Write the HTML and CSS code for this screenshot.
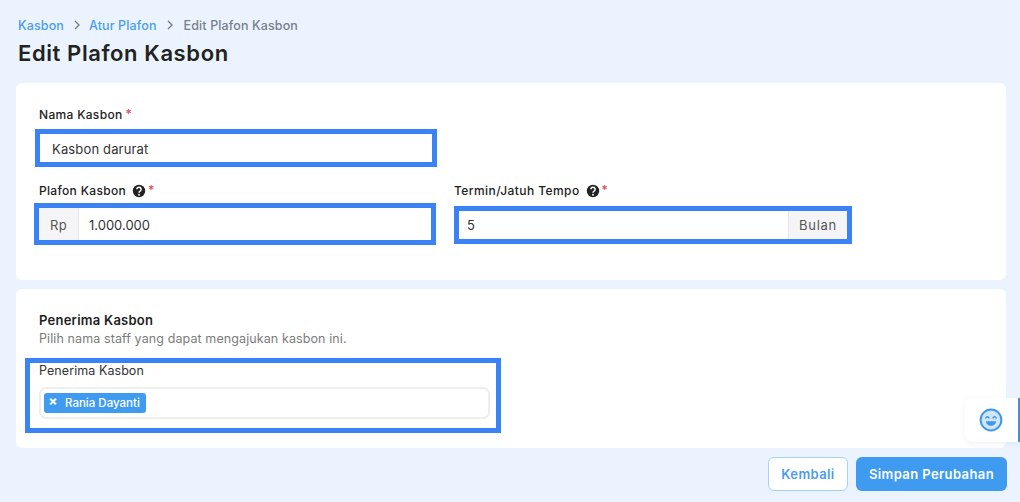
FILE: index.html
```html
<!DOCTYPE html>
<html lang="id">
<head>
<meta charset="utf-8">
<title>Edit Plafon Kasbon</title>
<link rel="stylesheet" href="styles.css">
</head>
<body>
<main class="page">
  <nav class="crumbs">
    <a class="crumb-link">Kasbon</a>
    <svg class="chev" viewBox="0 0 8 10"><path d="M2 1l4 4-4 4" fill="none" stroke="currentColor" stroke-width="1.4"/></svg>
    <a class="crumb-link">Atur Plafon</a>
    <svg class="chev" viewBox="0 0 8 10"><path d="M2 1l4 4-4 4" fill="none" stroke="currentColor" stroke-width="1.4"/></svg>
    <span class="crumb-current">Edit Plafon Kasbon</span>
  </nav>
  <h1 class="title">Edit Plafon Kasbon</h1>

  <section class="card card-main">
    <div class="label">Nama Kasbon <span class="req req-name">*</span></div>
    <div class="hl hl-name"><div class="plain-value">Kasbon darurat</div></div>
    <div class="row">
      <div class="col col-left">
        <div class="label">Plafon Kasbon
          <svg class="help" viewBox="0 0 16 16"><circle cx="8" cy="8" r="6.2" fill="#222"/><path d="M5.9 6.3a2.1 2.1 0 1 1 3.2 1.8c-.7.4-1.1.8-1.1 1.6" fill="none" stroke="#fff" stroke-width="1.5"/><circle cx="8" cy="11.7" r=".95" fill="#fff"/></svg>
          <span class="req">*</span></div>
        <div class="hl hl-plafon">
          <span class="addon addon-left">Rp</span><span class="value">1.000.000</span>
        </div>
      </div>
      <div class="col col-right">
        <div class="label label-wide">Termin/Jatuh Tempo
          <svg class="help" viewBox="0 0 16 16"><circle cx="8" cy="8" r="6.2" fill="#222"/><path d="M5.9 6.3a2.1 2.1 0 1 1 3.2 1.8c-.7.4-1.1.8-1.1 1.6" fill="none" stroke="#fff" stroke-width="1.5"/><circle cx="8" cy="11.7" r=".95" fill="#fff"/></svg>
          <span class="req">*</span></div>
        <div class="hl hl-termin">
          <span class="value value-termin">5</span><span class="addon addon-right">Bulan</span>
        </div>
      </div>
    </div>
  </section>

  <section class="card card-recipients">
    <h2 class="section-title">Penerima Kasbon</h2>
    <p class="section-sub">Pilih nama staff yang dapat mengajukan kasbon ini.</p>
    <div class="hl hl-recipients">
      <div class="field-label">Penerima Kasbon</div>
      <div class="multi">
        <span class="tag"><span class="tag-x">×</span><span class="tag-text">Rania Dayanti</span></span>
      </div>
    </div>
  </section>

  <footer class="actions">
    <button class="btn btn-outline">Kembali</button>
    <button class="btn btn-solid">Simpan Perubahan</button>
  </footer>
</main>

<aside class="feedback">
  <svg class="smile" viewBox="0 0 24 24">
    <circle cx="12" cy="12" r="10.4" fill="#cfe5fb" stroke="#3f97ec" stroke-width="2"/>
    <path d="M6.8 10c.6-1.6 2.6-1.600 3.200 0M14 10c.6-1.6 2.600-1.600 3.200 0" fill="none" stroke="#3f97ec" stroke-width="1.400" stroke-linecap="round"/>
    <path d="M7 13.200h10c0 2.700-2.200 4.600-5 4.600s-5-1.900-5-4.600z" fill="#3f97ec"/>
  </svg>
</aside>
</body>
</html>
```
FILE: styles.css
```css
* { box-sizing: border-box; }
html, body { margin: 0; height: 502px; overflow: hidden; }
body {
  background: #ebf4fe;
  font-family: Inter, "Liberation Sans", sans-serif;
  color: #222;
  position: relative;
}
.page { padding: 17px 13px 0 16px; display: flex; flex-direction: column; }

.crumbs { display: flex; align-items: center; height: 16px; margin-left: 2px; font-size: 12.500px; font-weight: 500; letter-spacing: .12px; }
.crumb-link { color: #4a9df0; }
.crumb-current { color: #78808c; margin-left: 2px; }
.chev { width: 8px; height: 10px; margin: 0 8px 0 9px; color: #78808c; }

.title { margin: 4px 0 0 2px; font-size: 22px; line-height: 32px; font-weight: 600; color: #222; letter-spacing: .6px; }

.card { background: #fff; border-radius: 6px; width: 990px; }
.card-main { margin-top: 14px; height: 197px; padding: 24px 0 0 23px; }
.card-recipients { margin-top: 9px; height: 159px; padding: 22px 0 0 23px; }

.label { font-size: 12px; line-height: 16px; font-weight: 550; letter-spacing: .32px; color: #222; display: flex; align-items: center; }
.label-wide { letter-spacing: .42px; }
.req { color: #e5484d; margin-left: 1px; margin-top: -3px; }
.req-name { margin-left: 3px; }
.help { width: 16px; height: 16px; margin-left: 5px; }

.hl { border: 5px solid #3b82f6; background: #fff; display: flex; align-items: stretch; font-size: 13px; color: #333; }
.hl-name { width: 402px; height: 38px; margin: 6px 0 0 -4px; letter-spacing: .15px; }
.plain-value { padding: 0 0 0 12px; line-height: 31px; width: 100%; }

.row { display: flex; margin-top: 16px; }
.col { display: flex; flex-direction: column; }
.col-left { width: 392px; margin-right: 23px; }
.hl-plafon { width: 402px; height: 42px; margin: 4px 0 0 -5px; }
.hl-plafon .addon, .hl-plafon .value { padding-top: 2px; }
.hl-termin { width: 398px; height: 38px; margin: 7px 0 0 0; }
.addon { background: #f5f5f7; color: #555; display: flex; align-items: center; justify-content: center; }
.addon-left { width: 40px; border-right: 1px solid #e6e6e8; letter-spacing: .3px; }
.addon-right { width: 59px; border-left: 1px solid #e6e6e8; letter-spacing: .7px; }
.value { flex: 1; padding-left: 10px; display: flex; align-items: center; }
.value-termin { padding-left: 8px; }

.section-title { margin: 0; font-size: 13px; line-height: 18px; font-weight: 600; color: #222; letter-spacing: .25px; }
.section-sub { margin: 1px 0 0; font-size: 12.500px; line-height: 18px; color: #7b7b7b; letter-spacing: .1px; }

.hl-recipients { width: 476px; height: 75px; margin: 10px 0 0 -14px; flex-direction: column; padding: 0 6px 0 9px; }
.field-label { font-size: 12.500px; line-height: 16px; margin-top: 0; color: #333; letter-spacing: .07px; }
.multi { margin-top: 8px; height: 32px; border: 2px solid #eeeeef; border-radius: 7px; padding: 4px 3px; display: flex; align-items: flex-start; }
.tag { height: 20px; background: #3f9bf0; border-radius: 3px; color: #fff; display: flex; align-items: center; font-size: 11.500px; font-weight: 500; }
.tag-x { width: 18px; height: 20px; text-align: center; font-weight: 800; font-size: 13px; line-height: 14px; }
.tag-text { padding: 0 6px 0 3px; }

.actions { display: flex; justify-content: flex-end; gap: 8px; margin-top: 9px; width: 991px; }
.btn { height: 34px; border-radius: 6px; font-family: inherit; font-size: 13px; font-weight: 600; padding: 0; letter-spacing: .4px; }
.btn-outline { width: 80px; background: #fff; border: 1.500px solid #a5d2fb; color: #4a9df0; }
.btn-solid { width: 151px; background: #3f9bf0; border: 0; color: #fff; }

.feedback {
  position: absolute; left: 965px; top: 398px; width: 55px; height: 44px;
  background: #fff; border-right: 2px solid #3f8fe0; border-radius: 8px 0 0 8px;
  box-shadow: 0 2px 6px rgba(60, 90, 130, .08);
  display: flex; align-items: center; padding-left: 14px;
}
.smile { width: 24px; height: 24px; }
```
